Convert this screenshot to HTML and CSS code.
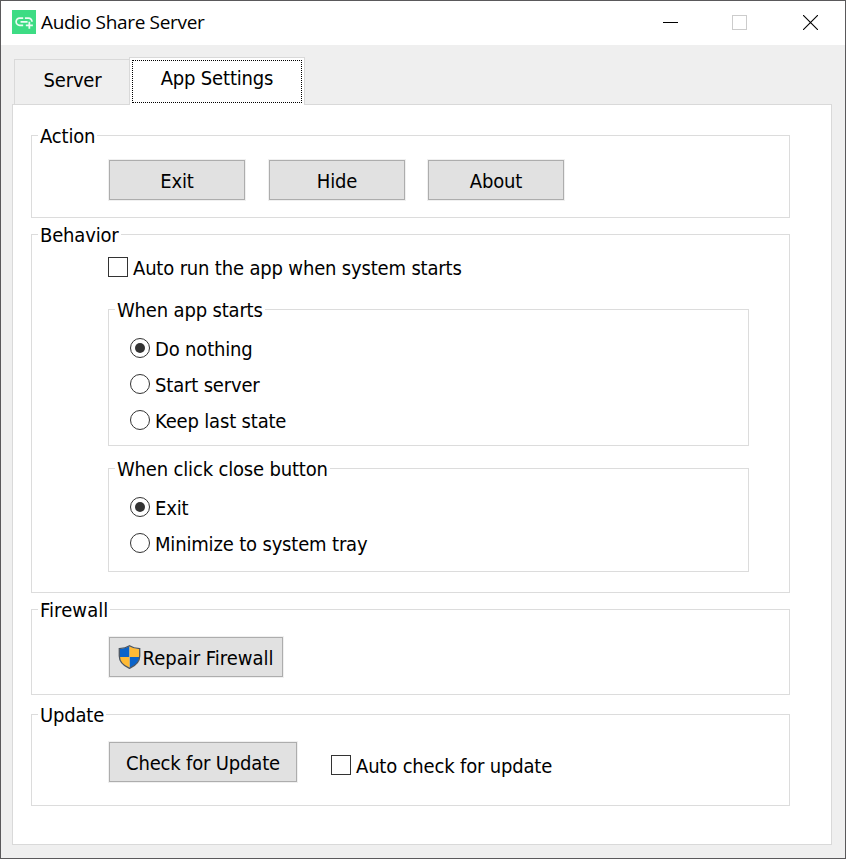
FILE: index.html
```
<!DOCTYPE html>
<html lang="en">
<head>
<meta charset="utf-8">
<title>Audio Share Server</title>
<link rel="stylesheet" href="styles.css">
</head>
<body>
<div class="window">
  <header class="titlebar">
    <svg class="app-icon" viewBox="0 0 24 24"><rect width="24" height="24" fill="#3ddc84"/><path transform="translate(1.5 1.2) scale(.88)" fill="#fff" fill-opacity=".9" d="M8 11h8v2H8zm12.1 1H22c0-2.76-2.24-5-5-5h-4v1.9h4c1.71 0 3.1 1.39 3.1 3.1zM3.9 12c0-1.71 1.39-3.1 3.1-3.1h4V7H7c-2.76 0-5 2.24-5 5s2.24 5 5 5h4v-1.9H7c-1.71 0-3.1-1.39-3.1-3.1zM19 12h-2v3h-3v2h3v3h2v-3h3v-2h-3z"/></svg>
    <span class="app-title">Audio Share Server</span>
    <div class="controls">
      <svg viewBox="0 0 15 15"><path d="M0 7.5h15" stroke="#000"/></svg>
      <svg viewBox="0 0 15 15"><rect x=".5" y=".5" width="14" height="14" fill="none" stroke="#ccc"/></svg>
      <svg viewBox="0 0 15 15"><path d="M0 0l15 15M15 0L0 15" stroke="#000" stroke-width="1.1"/></svg>
    </div>
  </header>
  <nav class="tabs">
    <div class="tab">Server</div>
    <div class="tab active"><span class="focus">App Settings</span></div>
  </nav>
  <main class="panel">
    <section class="group action">
      <h2>Action</h2>
      <div class="row buttons"><button>Exit</button><button>Hide</button><button>About</button></div>
    </section>
    <section class="group behavior">
      <h2>Behavior</h2>
      <label class="option check"><i class="box"></i>Auto run the app when system starts</label>
      <section class="group starts">
        <h2>When app starts</h2>
        <label class="option radio"><i class="circle on"></i>Do nothing</label>
        <label class="option radio"><i class="circle"></i>Start server</label>
        <label class="option radio"><i class="circle"></i>Keep last state</label>
      </section>
      <section class="group closes">
        <h2>When click close button</h2>
        <label class="option radio"><i class="circle on"></i>Exit</label>
        <label class="option radio"><i class="circle"></i>Minimize to system tray</label>
      </section>
    </section>
    <section class="group firewall">
      <h2>Firewall</h2>
      <div class="row"><button class="repair"><svg class="shield" viewBox="0 0 22 24"><defs><clipPath id="s"><path d="M11 1C8 3 4.500 3.600 1 3.700V11c0 6 4.500 9.800 10 12 5.500-2.200 10-6 10-12V3.700C17.500 3.600 14 3 11 1z"/></clipPath></defs><g clip-path="url(#s)"><path fill="#0a63c9" d="M0 0h11v12H0zM11 12h11v12H11z"/><path fill="#ffba35" d="M11 0h11v12H11zM0 12h11v12H0z"/></g><path fill="none" stroke="#4c5560" stroke-width="1.300" d="M11 .8C8 2.800 4.500 3.500.8 3.600V11c0 6 4.700 10 10.200 12.300 5.500-2.300 10.200-6.300 10.200-12.300V3.600C17.500 3.500 14 2.800 11 .8z"/></svg>Repair Firewall</button></div>
    </section>
    <section class="group update">
      <h2>Update</h2>
      <div class="row"><button class="wide">Check for Update</button><label class="option"><i class="box"></i>Auto check for update</label></div>
    </section>
  </main>
</div>
</body>
</html>
```
FILE: styles.css
```
* { box-sizing: border-box; }
body {
  margin: 0;
  color: #000;
  font: 20px/24px "DejaVu Sans Condensed", "DejaVu Sans", sans-serif;
  letter-spacing: -.17px;
  white-space: nowrap;
}
.window {
  width: 846px;
  height: 859px;
  border: 1px solid #5a595b;
  background: #efefef;
}
.titlebar {
  display: flex;
  align-items: center;
  height: 44px;
  padding: 0 27px 2px 11px;
  background: #fff;
}
.app-icon { width: 24px; height: 24px; margin-right: 5px; }
.app-title {
  font-family: "Open Sans", sans-serif;
  font-size: 19px;
  letter-spacing: -.32px;
}
.controls { display: flex; gap: 54px; margin: 1px 0 0 auto; }
.controls svg { width: 15px; height: 15px; }
.controls svg:last-child { margin-left: 2px; }
svg { display: block; flex: none; }
.tabs {
  display: flex;
  align-items: flex-end;
  height: 60px;
  padding-left: 13px;
}
.tab {
  width: 115px;
  height: 46px;
  padding: 8px 0 0 1px;
  border: 1px solid #d9d9d9;
  border-right: 0;
  text-align: center;
}
.tab.active {
  width: 176px;
  height: 48px;
  padding: 2px 2px 0;
  border-right: 1px solid #d9d9d9;
  border-bottom: 0;
  background: #fff;
  z-index: 1;
}
.focus {
  display: block;
  height: 43px;
  padding-top: 5px;
  border: 1px dotted #000;
}
.panel {
  width: 820px;
  height: 741px;
  margin: -1px 0 0 11px;
  padding: 30px 0 0 18px;
  border: 1px solid #d9d9d9;
  background: #fff;
}
.group { width: 759px; border: 1px solid #dcdcdc; }
.group h2 {
  width: max-content;
  height: 24px;
  margin: -12px 0 0 6px;
  padding: 0 2px;
  background: #fff;
  font-size: inherit;
  font-weight: normal;
}
.action { height: 83px; }
.behavior { height: 359px; margin-top: 16px; }
.firewall { height: 86px; margin-top: 16px; }
.firewall h2 { letter-spacing: .1px; }
.update { height: 92px; margin-top: 19px; }
.row { display: flex; margin: 12px 0 0 77px; }
.firewall .row { margin-top: 15px; }
.update .row { margin-top: 15px; }
.buttons { gap: 23px; }
button {
  display: flex;
  align-items: center;
  justify-content: center;
  width: 136px;
  height: 40px;
  margin: 0;
  padding: 2px 0 0;
  border: 1px solid #adadad;
  outline: 1px solid #f0f0f0;
  background: #e1e1e1;
  color: inherit;
  font: inherit;
  letter-spacing: inherit;
}
.buttons button:first-child { margin-right: 1px; }
.repair { width: 174px; padding-right: 1px; letter-spacing: 0; }
.shield { width: 23px; height: 24px; margin: -3px 2px 0 0; }
.wide { width: 188px; }
.option { display: flex; align-items: center; height: 24px; }
.check { margin: 9px 0 0 76px; }
.box {
  width: 20px;
  height: 20px;
  margin: -2px 5px 0 0;
  border: 1px solid #333;
  background: #fff;
}
.update .option { margin: 12px 0 0 34px; }
.starts, .closes { width: 641px; margin-left: 76px; }
.starts { height: 137px; margin-top: 29px; }
.closes { height: 104px; margin-top: 22px; }
.radio { height: 36px; margin-left: 21px; }
.starts h2 + .radio, .closes h2 + .radio { margin-top: 9px; }
.circle {
  display: flex;
  align-items: center;
  justify-content: center;
  width: 20px;
  height: 20px;
  margin: -2px 5px 0 0;
  border: 1px solid #333;
  border-radius: 50%;
  background: #fff;
}
.on::after {
  content: "";
  width: 10px;
  height: 10px;
  border-radius: 50%;
  background: #333;
}
```
